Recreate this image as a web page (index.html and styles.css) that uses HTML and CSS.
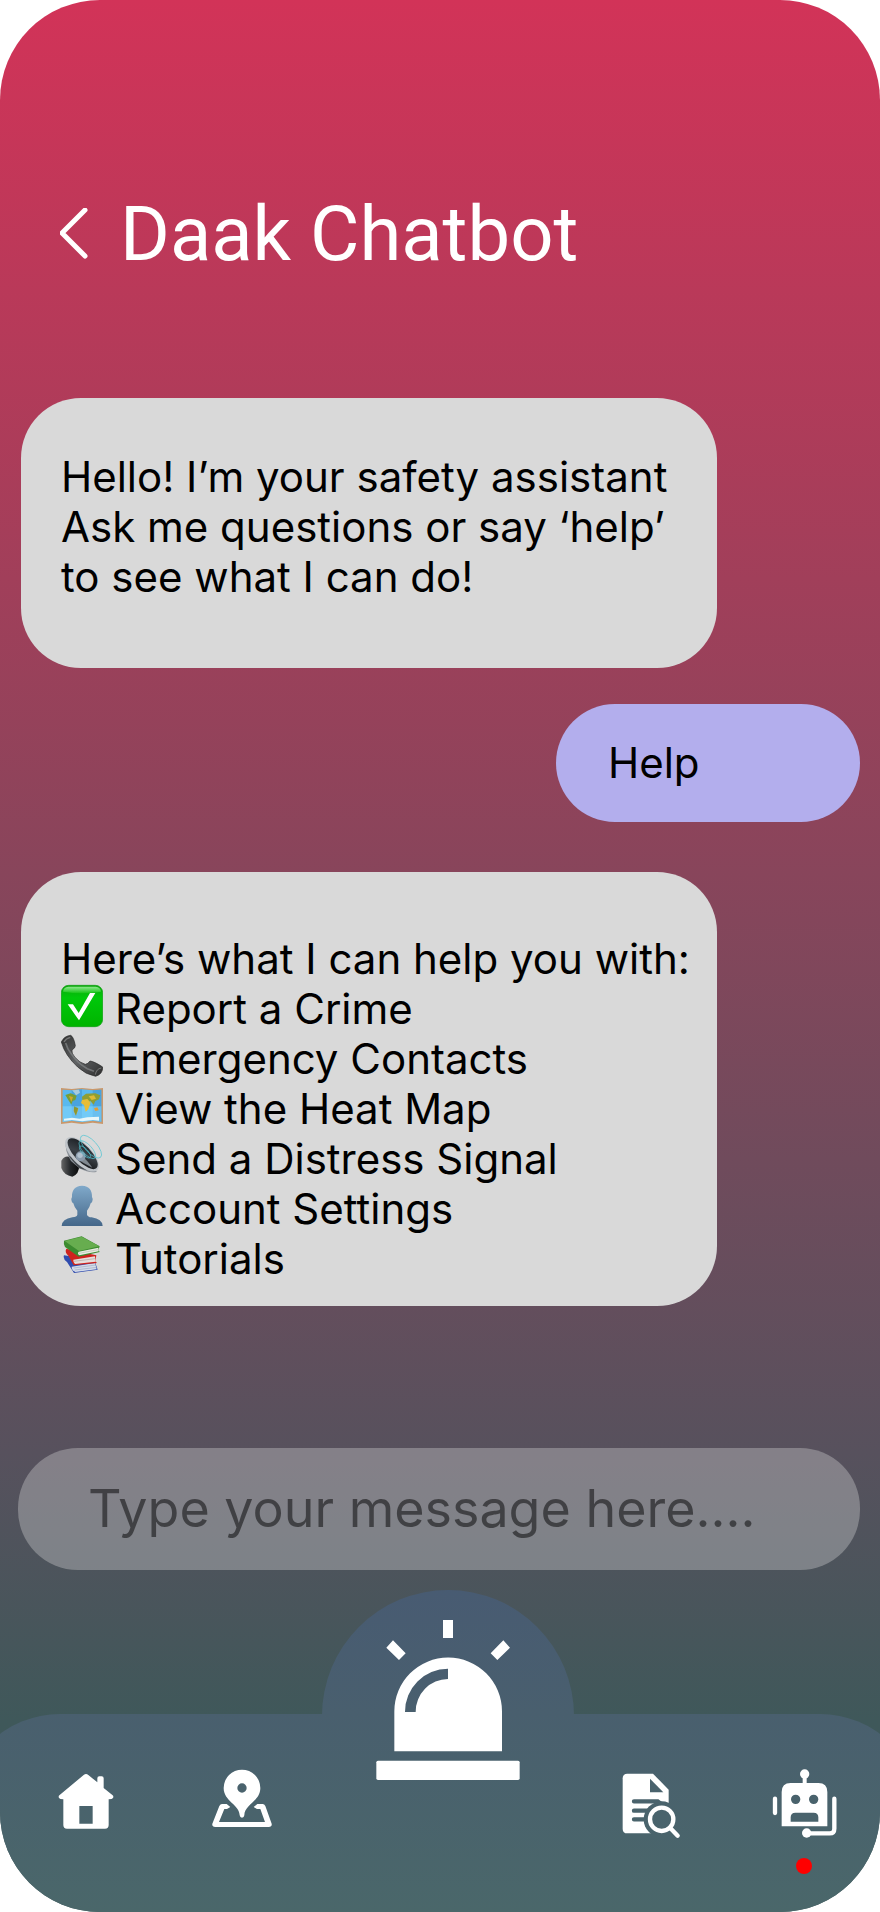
FILE: index.html
```html
<!DOCTYPE html>
<html lang="en">
<head>
<meta charset="utf-8">
<meta name="viewport" content="width=device-width, initial-scale=1">
<title>Daak Chatbot</title>
<link rel="stylesheet" href="styles.css">
</head>
<body>
<div class="screen">
  <header class="header">
    <button class="back" type="button" aria-label="Back">
      <svg width="30" height="52" viewBox="0 0 30 52" fill="none" stroke="#fff" stroke-width="5" stroke-linecap="round" stroke-linejoin="round"><path d="M25 2 L2 25 L25 48"/></svg>
    </button>
    <h1 class="title">Daak Chatbot</h1>
  </header>

  <main class="chat">
    <div class="bubble bubble-greeting">
      <p>Hello! I’m your safety assistant<br>Ask me questions or say ‘help’<br>to see what I can do!</p>
    </div>
    <div class="bubble bubble-user"><p>Help</p></div>
    <div class="bubble bubble-options">
      <p>Here’s what I can help you with:</p>
      <ul class="options">
        <li>
          <svg class="emoji" viewBox="0 0 126 126" aria-hidden="true">
            <defs>
              <linearGradient id="green" x1="0" y1="0" x2="0" y2="1"><stop offset="0" stop-color="#0ba80b"/><stop offset=".3" stop-color="#00c80a"/><stop offset="1" stop-color="#00b400"/></linearGradient>
              <linearGradient id="gloss" x1="0" y1="0" x2="0" y2="1"><stop offset="0" stop-color="#8fe68f"/><stop offset="1" stop-color="#13c413"/></linearGradient>
            </defs>
            <rect x="1" y="1" width="124" height="124" rx="22" fill="url(#green)" stroke="#079a0c" stroke-width="2"/>
            <path d="M22 5 H104 Q119 7 120 20 Q63 30 6 20 Q7 7 22 5Z" fill="url(#gloss)"/>
            <path d="M20 58 H36 L53 84 L87 24 H103 L54 106 Z" fill="#fff"/>
          </svg>
          <span>Report a Crime</span>
        </li>
        <li>
          <svg class="emoji" viewBox="0 0 126 126" aria-hidden="true">
            <defs><linearGradient id="phone" x1="0" y1="0" x2="1" y2="1"><stop offset="0" stop-color="#333"/><stop offset=".5" stop-color="#606264"/><stop offset="1" stop-color="#2e2e2e"/></linearGradient></defs>
            <path d="M1 21 Q9 3 29 1 Q38 5 43 32 Q43 39 33 45 Q31 54 41 66 Q56 84 73 88 Q80 88 87 78 Q101 80 125 96 Q126 117 104 124 Q74 119 50 96 Q12 61 1 21Z" fill="url(#phone)" stroke="#292929" stroke-width="2"/>
            <path d="M14 24 Q19 43 32 58 Q48 83 79 101 L99 109" fill="none" stroke="#858789" stroke-width="5" opacity=".7"/>
            <path d="M9 21 Q15 10 28 7" fill="none" stroke="#777" stroke-width="4"/>
            <path d="M103 119 Q106 101 121 99" fill="none" stroke="#777" stroke-width="3"/>
          </svg>
          <span>Emergency Contacts</span>
        </li>
        <li>
          <svg class="emoji" viewBox="0 0 126 126" aria-hidden="true">
            <path d="M0 9 L32 12 L63 9 L95 12 L126 9 V117 L95 113 L63 117 L32 113 L0 117Z" fill="#c9986c"/>
            <path d="M5 14 L32 16 L63 13 L95 16 L121 14 V110 L95 107 L63 111 L32 107 L5 111Z" fill="#59b9ef"/>
            <path d="M32 16 L63 13 V111 L32 107Z M95 16 L121 14 V110 L95 107Z" fill="#3c92cf" opacity=".55"/>
            <path d="M5 64 H121 V110 L95 107 L63 111 L32 107 L5 111Z" fill="#8bdcff" opacity=".5"/>
            <path d="M13 30 L29 25 L47 32 L43 45 L35 48 L31 59 L22 45Z" fill="#779e34"/>
            <path d="M24 33 L36 36 L31 51Z M39 67 L52 70 L49 81 L44 91 L38 78Z" fill="#d5a529"/>
            <path d="M39 64 L51 69 L45 93 L39 78Z" fill="#6f9132" opacity=".7"/>
            <path d="M33 16 L54 14 L57 23 L45 31 L40 23Z" fill="#a7cbdc"/>
            <path d="M63 35 L75 26 L103 25 L118 31 L114 43 L103 48 L98 59 L88 48 L78 54 L64 47Z" fill="#8f9e34"/>
            <path d="M63 45 L79 42 L89 53 L81 74 L74 80 L69 60 L60 54Z" fill="#e8bd38"/>
            <path d="M83 34 L99 31 L105 41 L92 45Z" fill="#dfba36"/>
            <path d="M99 70 L109 67 L113 76 L103 78Z" fill="#e69c32"/>
            <path d="M9 101 L34 98 L55 101 L79 97 L114 95 V107 L95 105 L63 109 L32 105 L9 107Z" fill="#e8f6f9"/>
          </svg>
          <span>View the Heat Map</span>
        </li>
        <li>
          <svg class="emoji" viewBox="0 0 126 126" aria-hidden="true">
            <defs>
              <linearGradient id="cone" x1="0" y1="0" x2="1" y2="1"><stop offset="0" stop-color="#14181b"/><stop offset=".5" stop-color="#3b4147"/><stop offset="1" stop-color="#0f1011"/></linearGradient>
              <linearGradient id="magnet"><stop offset="0" stop-color="#666"/><stop offset=".5" stop-color="#25282b"/><stop offset="1" stop-color="#090909"/></linearGradient>
            </defs>
            <path d="M1 77 Q12 60 26 66 L55 91 Q54 119 34 125 Q9 121 1 99Z" fill="url(#magnet)"/>
            <path d="M15 19 Q10 46 30 78 L55 100 Q87 116 108 110 L82 94 Q38 72 15 19Z" fill="#8b9198"/>
            <path d="M23 63 L53 99 L78 106 L38 68Z" fill="#43484d"/>
            <ellipse cx="63" cy="58" rx="66" ry="30" transform="rotate(46 63 58)" fill="#bfc4c9"/>
            <ellipse cx="65" cy="56" rx="60" ry="24" transform="rotate(46 65 56)" fill="url(#cone)"/>
            <path d="M49 73 Q67 85 94 98 Q78 74 64 65Z" fill="#b1bbc5" opacity=".65"/>
            <circle cx="59" cy="64" r="15" fill="#8a9aab"/>
            <circle cx="57" cy="61" r="8" fill="#b2c1ce"/>
            <g fill="none" stroke="#4ec4d2" stroke-width="2"><ellipse cx="90" cy="35" rx="43" ry="18" transform="rotate(48 90 35)"/><ellipse cx="79" cy="44" rx="34" ry="14" transform="rotate(48 79 44)"/><ellipse cx="72" cy="51" rx="23" ry="9" transform="rotate(48 72 51)"/></g>
          </svg>
          <span>Send a Distress Signal</span>
        </li>
        <li>
          <svg class="emoji" viewBox="0 0 126 126" aria-hidden="true">
            <defs><linearGradient id="person" x1="0" y1="0" x2="0" y2="1"><stop offset="0" stop-color="#80a9ca"/><stop offset="1" stop-color="#456789"/></linearGradient></defs>
            <path d="M63 2 C85 2 94 17 93 36 Q97 42 94 49 Q93 54 89 55 Q86 68 78 77 V89 Q80 96 92 97 Q124 102 125 123 H2 Q3 102 34 97 Q48 95 49 89 V77 Q40 68 37 55 Q33 54 32 49 Q29 42 33 36 C32 17 41 2 63 2Z" fill="url(#person)"/>
          </svg>
          <span>Account Settings</span>
        </li>
        <li>
          <svg class="emoji" viewBox="0 0 126 126" aria-hidden="true">
            <path d="M9 61 Q5 71 18 81 L39 114 L110 104 L100 75Z" fill="#304cae"/>
            <path d="M32 95 L102 84 L107 103 L43 111 Q32 106 32 95Z" fill="#d5dce9"/>
            <path d="M38 99 L104 90 M41 105 L107 97" stroke="#9caac6" stroke-width="2"/>
            <path d="M16 41 Q10 51 22 62 L38 91 L108 84 L103 79 L106 61 L48 49Z" fill="#cf231e"/>
            <path d="M37 74 L102 64 L104 80 L42 87 Q36 82 37 74Z" fill="#e6dedb"/>
            <path d="M39 79 L102 71" stroke="#afa49e" stroke-width="2"/>
            <path d="M9 17 L62 4 L116 34 L114 40 Q110 45 116 51 L53 65 L12 36 Q7 28 9 17Z" fill="#3c8b30"/>
            <path d="M11 18 L62 5 L115 34 L54 48Z" fill="#67ad4f"/>
            <path d="M53 50 L112 38 L113 49 L55 61 Q48 56 53 50Z" fill="#e8ece1"/>
            <path d="M54 55 L111 44" stroke="#b6bfae" stroke-width="2"/>
          </svg>
          <span>Tutorials</span>
        </li>
      </ul>
    </div>
  </main>

  <form class="composer">
    <input class="message" type="text" aria-label="Message" placeholder="Type your message here....">
  </form>

  <nav class="nav" aria-label="Main">
    <a class="nav-link nav-home" href="#home" aria-label="Home">
      <svg width="56" height="60" viewBox="54 58 168 180"><path fill="#fff" fill-rule="evenodd" d="M131 76 Q138 70 145 76 L172 98 V86 Q172 80 178 80 H185 Q191 80 191 86 V115 L217 136 Q222 140 219 145 Q217 149 206 149 V226 Q206 237 195 237 H81 Q70 237 70 226 V149 Q59 149 57 145 Q54 140 59 136 Z M118 169 V222 H158 V169 Z"/></svg>
    </a>
    <a class="nav-link" href="#map" aria-label="Map">
      <svg width="60" height="59" viewBox="516 58 180 177" fill="#fff"><path fill-rule="evenodd" d="M606 60 A55 55 0 0 1 661 115 C661 155 613 165 613 197 Q612 204 606 204 Q600 204 599 197 C599 165 551 155 551 115 A55 55 0 0 1 606 60Z M606 101 A14 14 0 1 0 606 129 A14 14 0 1 0 606 101Z"/><path d="M571 172 L561 178 H553 L537 217 H675 L661 178 H651 L641 172 L652 163 H668 Q673 163 676 169 L695 222 Q697 232 686 232 H526 Q515 232 517 222 L538 169 Q541 163 546 163 H560 Z"/></svg>
    </a>
    <button class="siren" type="button" aria-label="Emergency alert">
      <svg width="144" height="160" viewBox="228 150 432 480" fill="#fff"><path d="M429 150 H459 V204 H429Z M279 211 L317 250 L297 270 L259 233Z M610 211 L572 250 L592 270 L630 233Z"/><path fill-rule="evenodd" d="M283 544 V424 A161 161 0 0 1 606 424 V544Z M444 296 A129 129 0 0 0 315 426 H347 A98 98 0 0 1 444 327Z"/><rect x="229" y="572" width="430" height="58" rx="5"/></svg>
    </button>
    <a class="nav-link" href="#reports" aria-label="Reports">
      <svg width="59" height="70" viewBox="67 58 177 210">
        <mask id="page-cut" maskUnits="userSpaceOnUse" x="60" y="50" width="190" height="220">
          <rect x="60" y="50" width="190" height="220" fill="#fff"/>
          <path d="M151 87 V128 H191Z"/>
          <path d="M103 155 H174 L184 163 M103 183 H160 M103 209 H150" stroke="#000" stroke-width="13" stroke-linecap="round" fill="none"/>
          <circle cx="186" cy="209" r="54"/>
        </mask>
        <path d="M83 72 H160 L207 120 V251 H83 Q69 251 69 237 V86 Q69 72 83 72Z" fill="#fff" mask="url(#page-cut)"/>
        <g fill="none" stroke="#fff" stroke-width="13"><circle cx="186" cy="209" r="35"/><path d="M211 234 L234 258" stroke-linecap="round"/></g>
      </svg>
    </a>
    <a class="nav-link" href="#chatbot" aria-label="Chatbot" aria-current="page">
      <svg width="65" height="69" viewBox="514 58 195 207" fill="#fff"><circle cx="612" cy="73" r="14"/><path d="M606 80 H618 V104 H606Z"/><path fill-rule="evenodd" d="M570 100 H653 Q680 100 680 127 V230 H543 V127 Q543 100 570 100Z M585 135 A14 14 0 1 0 585 163 A14 14 0 1 0 585 135Z M639 135 A14 14 0 1 0 639 163 A14 14 0 1 0 639 135Z M584 189 Q570 189 570 203 V216 H653 V203 Q653 189 639 189Z"/><g fill="none" stroke="#fff" stroke-width="13" stroke-linecap="round"><path d="M523 147 V190"/><path d="M701 147 V237 Q701 251 687 251 H620"/></g><circle cx="618" cy="250" r="14"/></svg>
      <span class="dot"></span>
    </a>
  </nav>
</div>
</body>
</html>
```
FILE: styles.css
```css
* {
  box-sizing: border-box;
}

body {
  margin: 0;
  background: #fff;
  font-family: Inter, "Liberation Sans", sans-serif;
  color: #000;
}

h1,
p,
ul {
  margin: 0;
  padding: 0;
}

button {
  border: 0;
  padding: 0;
  background: none;
  cursor: pointer;
}

svg {
  display: block;
}

.screen {
  display: flex;
  flex-direction: column;
  min-height: 100vh;
  overflow: hidden;
  border-radius: 100px;
  background: linear-gradient(#d23358 0%, #57515d 76%, #3f585a 90%);
}

.header {
  display: flex;
  align-items: center;
  gap: 30px;
  padding: 189px 60px 0;
}

.title {
  font: 400 76px/90px Roboto, "Liberation Sans", sans-serif;
  color: #fff;
}

.chat {
  display: flex;
  flex-direction: column;
  align-items: flex-start;
  padding: 119px 20px 0 21px;
  font-size: 42px;
  font-weight: 370;
  line-height: 50px;
}

.bubble {
  border-radius: 60px;
  background: #d9d9d9;
}

.bubble-greeting {
  width: 83%;
  padding: 54px 20px 66px 40px;
}

.bubble-user {
  align-self: flex-end;
  min-width: 304px;
  margin: 36px 0 50px;
  padding: 34px 52px;
  background: #b3aeed;
}

.bubble-options {
  width: 83%;
  padding: 62px 16px 22px 40px;
}

.options {
  list-style: none;
}

.options li {
  display: flex;
  gap: 12px;
}

.emoji {
  flex: none;
  width: 42px;
  height: 44px;
}

.composer {
  margin-top: auto;
  padding: 0 20px 0 18px;
}

.message {
  width: 100%;
  padding: 30px 70px;
  border: 0;
  border-radius: 60px;
  outline: 0;
  background: rgba(217, 217, 217, 0.35);
  font: 370 52px/62px Inter, "Liberation Sans", sans-serif;
  color: #000;
}

.message::placeholder {
  color: rgba(0, 0, 0, 0.5);
  opacity: 1;
}

.nav {
  display: grid;
  grid-template-columns: 161fr 161fr 252px 154fr 152fr;
  min-height: 198px;
  margin: 144px -40px 0;
  padding: 0 40px;
  border-radius: 100px 100px 0 0;
  background: linear-gradient(#495f6e, #4a676a);
}

.nav-link {
  display: flex;
  flex-direction: column;
  align-items: center;
  gap: 20px;
  padding-top: 55px;
}

.nav-home {
  padding-left: 10px;
}

.dot {
  width: 16px;
  height: 16px;
  border-radius: 50%;
  background: #f00;
}

.siren {
  display: flex;
  justify-content: center;
  align-self: start;
  margin-top: -124px;
  padding-top: 30px;
  border-radius: 126px 126px 0 0;
  background: linear-gradient(#485b72, #495f6e) top / 100% 124px no-repeat;
}
```
